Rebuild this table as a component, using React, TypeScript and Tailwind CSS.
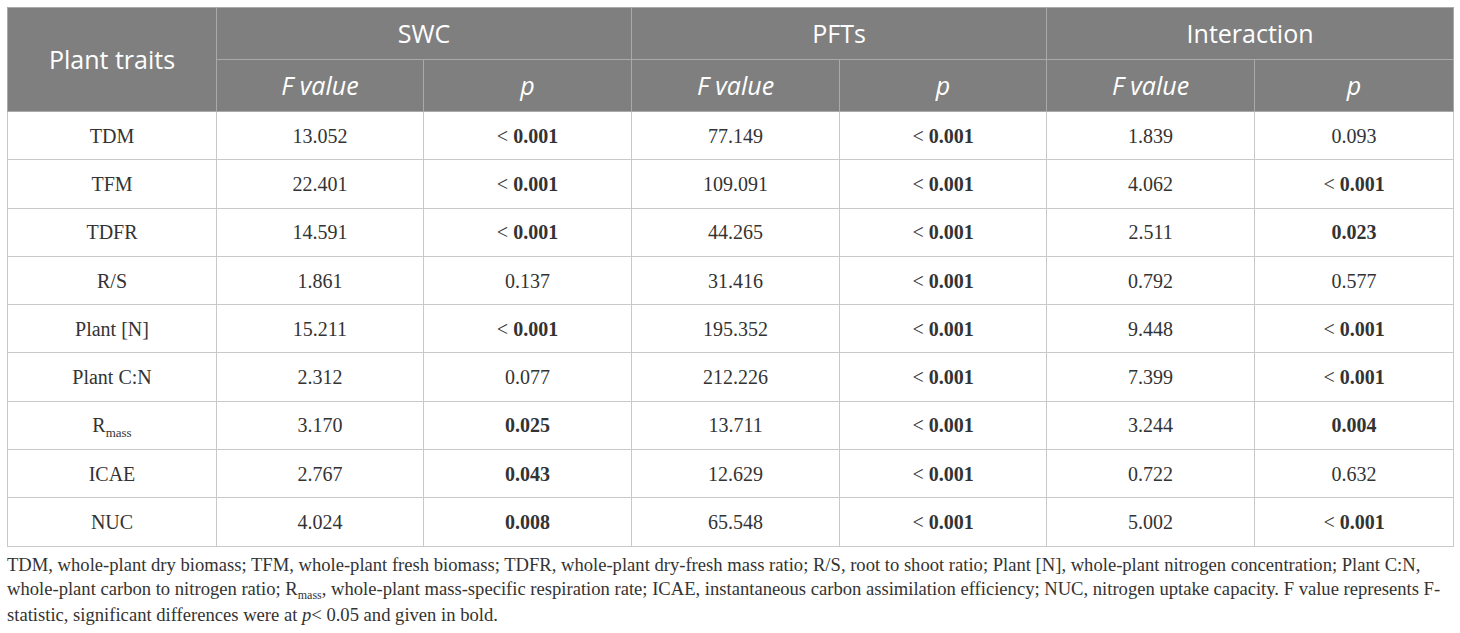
type Cell = { v: string; b?: boolean };

const rows: { name: React.ReactNode; cells: Cell[] }[] = [
  { name: "TDM", cells: [{ v: "13.052" }, { v: "0.001", b: true }, { v: "77.149" }, { v: "0.001", b: true }, { v: "1.839" }, { v: "0.093" }] },
  { name: "TFM", cells: [{ v: "22.401" }, { v: "0.001", b: true }, { v: "109.091" }, { v: "0.001", b: true }, { v: "4.062" }, { v: "0.001", b: true }] },
  { name: "TDFR", cells: [{ v: "14.591" }, { v: "0.001", b: true }, { v: "44.265" }, { v: "0.001", b: true }, { v: "2.511" }, { v: "0.023", b: true }] },
  { name: "R/S", cells: [{ v: "1.861" }, { v: "0.137" }, { v: "31.416" }, { v: "0.001", b: true }, { v: "0.792" }, { v: "0.577" }] },
  { name: "Plant [N]", cells: [{ v: "15.211" }, { v: "0.001", b: true }, { v: "195.352" }, { v: "0.001", b: true }, { v: "9.448" }, { v: "0.001", b: true }] },
  { name: "Plant C:N", cells: [{ v: "2.312" }, { v: "0.077" }, { v: "212.226" }, { v: "0.001", b: true }, { v: "7.399" }, { v: "0.001", b: true }] },
  {
    name: (
      <>
        R<span className="relative top-[5px] text-[13px]">mass</span>
      </>
    ),
    cells: [{ v: "3.170" }, { v: "0.025", b: true }, { v: "13.711" }, { v: "0.001", b: true }, { v: "3.244" }, { v: "0.004", b: true }],
  },
  { name: "ICAE", cells: [{ v: "2.767" }, { v: "0.043", b: true }, { v: "12.629" }, { v: "0.001", b: true }, { v: "0.722" }, { v: "0.632" }] },
  { name: "NUC", cells: [{ v: "4.024" }, { v: "0.008", b: true }, { v: "65.548" }, { v: "0.001", b: true }, { v: "5.002" }, { v: "0.001", b: true }] },
];

// p values that are "< 0.001" keep the "<" regular and bold the number
function Value({ c, isP }: { c: Cell; isP: boolean }) {
  if (isP && c.v === "0.001" && c.b) {
    return (
      <>
        &lt; <b className="font-bold">0.001</b>
      </>
    );
  }
  return c.b ? <b className="font-bold">{c.v}</b> : <>{c.v}</>;
}

export default function App() {
  return (
    <div className="w-[1460px] h-[633px] bg-white pt-[7px] pl-[7px] overflow-hidden">
      <table className="w-[1446px] table-fixed border-collapse border border-[#c9c9c9]">
        <colgroup>
          <col className="w-[209px]" />
          <col className="w-[207px]" />
          <col className="w-[208px]" />
          <col className="w-[208px]" />
          <col className="w-[207px]" />
          <col className="w-[208px]" />
          <col className="w-[199px]" />
        </colgroup>
        <thead className="bg-[#7f7f7f] text-white font-['Open_Sans',sans-serif] text-[25px]">
          <tr className="h-[52px]">
            <th rowSpan={2} className="font-normal border border-[#a9a9a9]">
              Plant traits
            </th>
            <th colSpan={2} className="font-normal border border-[#a9a9a9]">
              SWC
            </th>
            <th colSpan={2} className="font-normal border border-[#a9a9a9]">
              PFTs
            </th>
            <th colSpan={2} className="font-normal border border-[#a9a9a9]">
              Interaction
            </th>
          </tr>
          <tr className="h-[52px]">
            {["F value", "p", "F value", "p", "F value", "p"].map((h, i) => (
              <th key={i} className="font-normal italic border border-[#a9a9a9]">
                {h}
              </th>
            ))}
          </tr>
        </thead>
        <tbody className="font-['Liberation_Serif',serif] text-[20px] text-[#333]">
          {rows.map((r, i) => (
            <tr key={i} className="h-[48.3px]">
              <td className="text-center border border-[#c9c9c9]">{r.name}</td>
              {r.cells.map((c, j) => (
                <td key={j} className="text-center border border-[#c9c9c9]">
                  <Value c={c} isP={j % 2 === 1} />
                </td>
              ))}
            </tr>
          ))}
        </tbody>
      </table>
      <p className="w-[1446px] mt-[6px] font-['Liberation_Serif',serif] text-[18.6px] leading-[24px] text-[#333]">
        TDM, whole-plant dry biomass; TFM, whole-plant fresh biomass; TDFR, whole-plant dry-fresh mass ratio; R/S, root to
        shoot ratio; Plant [N], whole-plant nitrogen concentration; Plant C:N, whole-plant carbon to nitrogen ratio; R
        <span className="relative top-[4px] text-[12px]">mass</span>, whole-plant mass-specific respiration rate; ICAE,
        instantaneous carbon assimilation efficiency; NUC, nitrogen uptake capacity. F value represents F-statistic,
        significant differences were at <i>p</i>&lt; 0.05 and given in bold.
      </p>
    </div>
  );
}
